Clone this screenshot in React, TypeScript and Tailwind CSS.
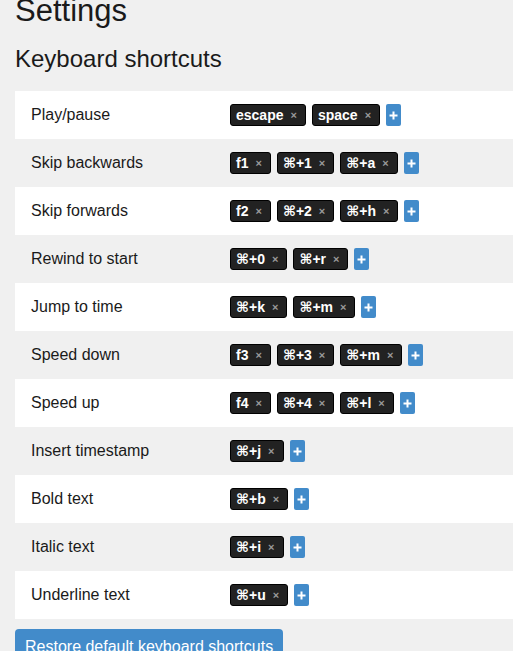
const shortcuts: { label: string; keys: string[] }[] = [
  { label: 'Play/pause', keys: ['escape', 'space'] },
  { label: 'Skip backwards', keys: ['f1', '⌘+1', '⌘+a'] },
  { label: 'Skip forwards', keys: ['f2', '⌘+2', '⌘+h'] },
  { label: 'Rewind to start', keys: ['⌘+0', '⌘+r'] },
  { label: 'Jump to time', keys: ['⌘+k', '⌘+m'] },
  { label: 'Speed down', keys: ['f3', '⌘+3', '⌘+m'] },
  { label: 'Speed up', keys: ['f4', '⌘+4', '⌘+l'] },
  { label: 'Insert timestamp', keys: ['⌘+j'] },
  { label: 'Bold text', keys: ['⌘+b'] },
  { label: 'Italic text', keys: ['⌘+i'] },
  { label: 'Underline text', keys: ['⌘+u'] },
];

function KeyTag({ text }: { text: string }) {
  return (
    <span className="flex h-[22px] items-center rounded-[3px] border border-black bg-[#222] pl-[5px] pr-[8px] text-[14px] font-bold leading-[20px] text-white">
      <span>{text}</span>
      <span className="ml-[7px] text-[11px] font-bold text-[#9a9a9a]">×</span>
    </span>
  );
}

function AddButton() {
  return (
    <button className="flex h-[22px] w-[15px] items-center justify-center rounded-[2px] bg-[#428bca]">
      <svg width="9" height="9" viewBox="0 0 9 9">
        <path d="M4.5 0.5v8M0.5 4.5h8" stroke="white" strokeWidth="2" />
      </svg>
    </button>
  );
}

export default function App() {
  return (
    <div className="min-h-screen overflow-hidden bg-[#f0f0f0] pl-[15px] font-['Liberation_Sans','DejaVu_Sans',sans-serif] text-[#1a1a1a]">
      <h1 className="mt-[-6px] text-[31px] leading-[33px]">Settings</h1>
      <h3 className="mt-[19px] text-[24px] leading-[26px]">Keyboard shortcuts</h3>

      {/* Shortcut table */}
      <div className="mt-[19px]">
        {shortcuts.map((s, i) => (
          <div
            key={s.label}
            className={`flex h-[48px] items-center ${i % 2 === 0 ? 'bg-white' : 'bg-[#f0f0f0]'}`}
          >
            <div className="w-[215px] shrink-0 pl-4 text-[16px]">{s.label}</div>
            <div className="flex items-center gap-[6px]">
              {s.keys.map((k, j) => (
                <KeyTag key={j} text={k} />
              ))}
              <AddButton />
            </div>
          </div>
        ))}
      </div>

      <button className="mt-[10px] rounded-[4px] bg-[#428bca] px-[10px] pb-[5px] pt-[6px] text-[16px] leading-[23px] text-white">
        Restore default keyboard shortcuts
      </button>
    </div>
  );
}
